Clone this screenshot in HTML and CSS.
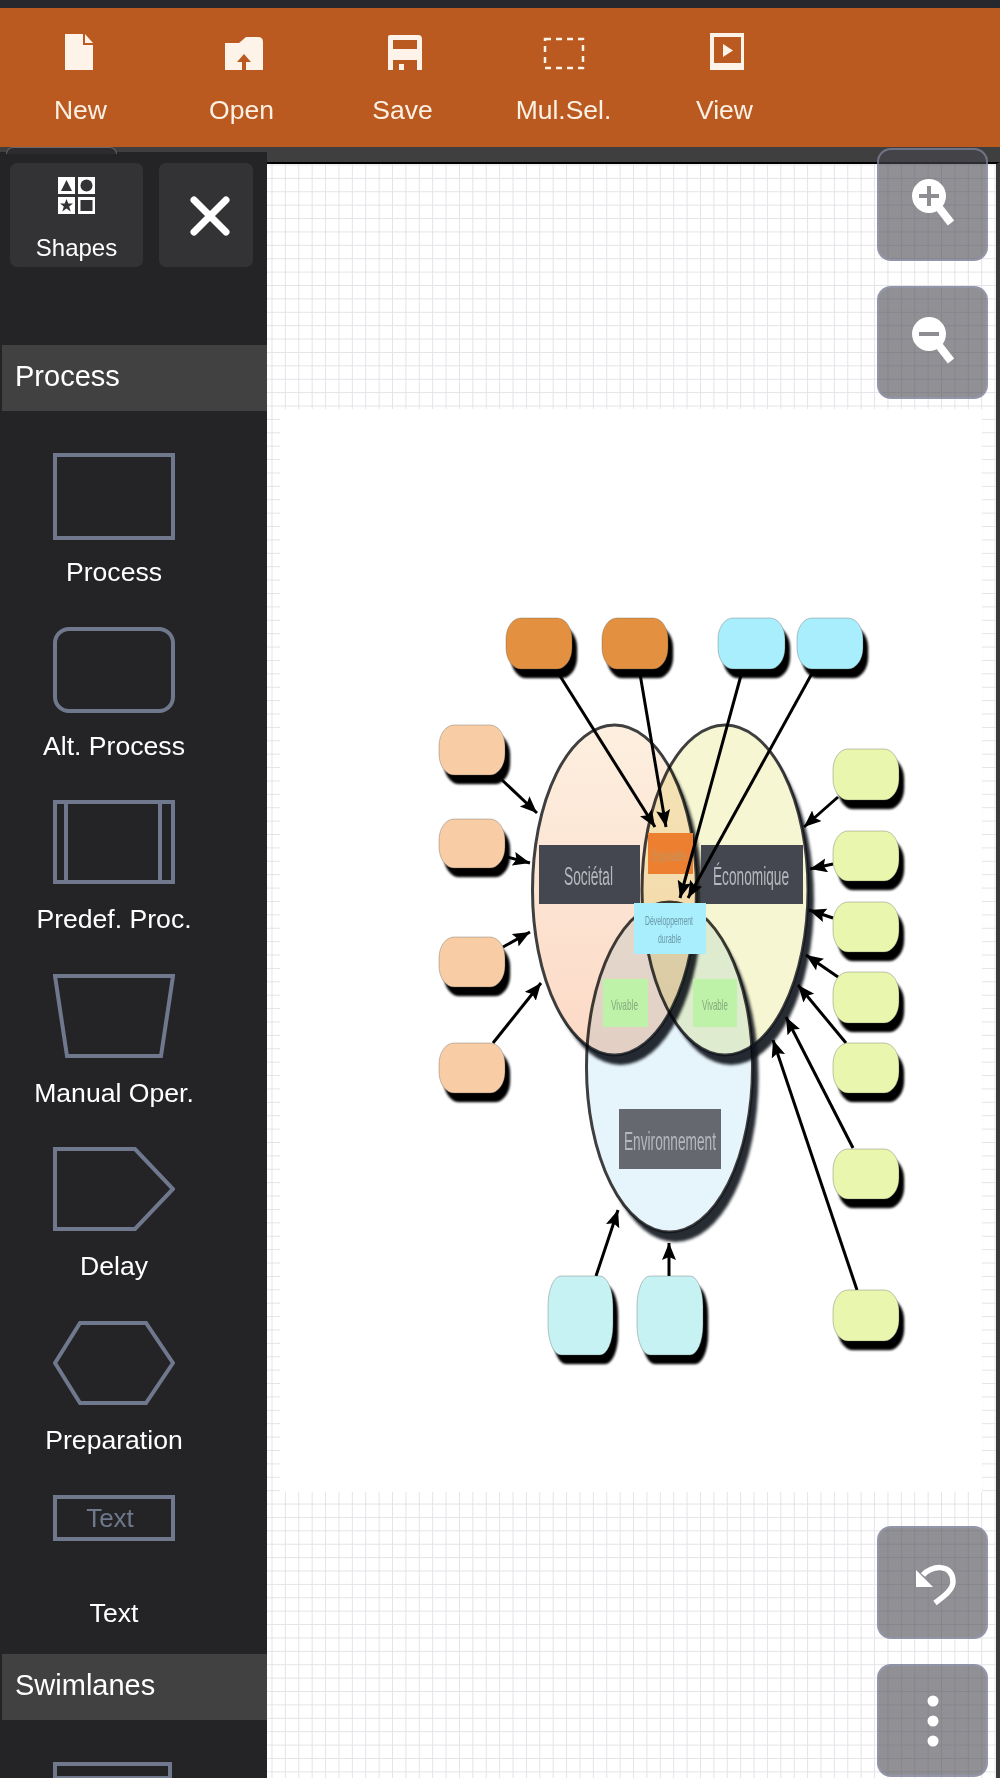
FILE: index.html
```html
<!DOCTYPE html>
<html lang="en">
<head>
  <meta charset="UTF-8" />
  <meta name="viewport" content="width=device-width, initial-scale=1.0"/>
  <title>Flowchart Editor</title>
  <link rel="stylesheet" href="styles.css">
</head>
<body>

<!-- Top toolbar -->
<div class="toolbar">
  <div class="tool">
    <svg width="40" height="38" viewBox="2 0 40 38"><path class="cream" d="M6 1H24V12H34V37H6Z"/><path class="cream" d="M26 1L34 10H26Z"/></svg>
    <span>New</span>
  </div>
  <div class="tool">
    <svg width="40" height="38" viewBox="-2 0 40 38"><path class="cream" fill-rule="evenodd" d="M1 10H15L22 4H34Q39 4 39 9V37H1ZM18 37H22V29H27L20 21L13 29H18Z"/></svg>
    <span>Open</span>
  </div>
  <div class="tool">
    <svg width="40" height="38" viewBox="-2 0 40 38"><path class="cream" fill-rule="evenodd" d="M5 2H33Q37 2 37 6V37H3V4Q3 2 5 2ZM8 7V16H32V7ZM8 27V37H14V31H19V37H32V27Z"/></svg>
    <span>Save</span>
  </div>
  <div class="tool">
    <svg width="42" height="38" viewBox="0 0 42 38"><rect class="dash" x="2" y="6" width="38" height="29"/></svg>
    <span>Mul.Sel.</span>
  </div>
  <div class="tool">
    <svg width="40" height="38" viewBox="-2 1 40 38"><path class="cream" fill-rule="evenodd" d="M3 1H37V38H3ZM7 5V31H34V5Z"/><path class="cream" d="M16 12L26 18.5L16 25Z"/></svg>
    <span>View</span>
  </div>
</div>

<div class="main">

  <!-- Shape palette -->
  <div class="sidebar">
    <div class="side-top">
      <div class="side-btn shapes-btn">
        <svg width="38" height="38" viewBox="1 0 38 38">
          <rect class="white" x="1" y="1" width="17" height="17"/>
          <rect class="white" x="21" y="1" width="17" height="17"/>
          <rect class="white" x="1" y="21" width="17" height="17"/>
          <rect class="white" x="21" y="21" width="17" height="17"/>
          <path class="ink" d="M9.5 4L15 15H4Z"/>
          <circle class="ink" cx="29.5" cy="9.5" r="6"/>
          <path class="ink" d="M9.5 23L11.3 27.6H16L12.2 30.6L13.7 35.5L9.5 32.6L5.3 35.5L6.8 30.6L3 27.6H7.7Z"/>
          <rect class="ink" x="23.500" y="24" width="12" height="11"/>
        </svg>
        <span>Shapes</span>
      </div>
      <div class="side-btn close-btn">
        <svg width="40" height="40" viewBox="0 0 40 40"><path class="x-mark" d="M4 4L36 36M36 4L4 36"/></svg>
      </div>
    </div>

    <div class="section-head first">Process</div>
    <div class="shape-list">
      <div class="shape-item">
        <svg class="shape" width="122" height="90" viewBox="0 -1 122 90"><rect x="2" y="3" width="118" height="83"/></svg>
        <span>Process</span>
      </div>
      <div class="shape-item">
        <svg class="shape" width="122" height="90" viewBox="0 -1 122 90"><rect x="2" y="3" width="118" height="82" rx="14"/></svg>
        <span>Alt. Process</span>
      </div>
      <div class="shape-item">
        <svg class="shape" width="122" height="90" viewBox="0 -1 122 90"><rect x="2" y="3" width="118" height="80"/><path d="M13 3V83M107 3V83"/></svg>
        <span>Predef. Proc.</span>
      </div>
      <div class="shape-item">
        <svg class="shape" width="122" height="90" viewBox="0 -1 122 90"><path d="M2 3H120L108 83H14Z"/></svg>
        <span>Manual Oper.</span>
      </div>
      <div class="shape-item">
        <svg class="shape" width="122" height="90" viewBox="0 -1 122 90"><path d="M2 3H82L120 43L82 83H2Z"/></svg>
        <span>Delay</span>
      </div>
      <div class="shape-item">
        <svg class="shape" width="122" height="90" viewBox="0 -1 122 90"><path d="M2 43L27 3H93L120 43L93 83H27Z"/></svg>
        <span>Preparation</span>
      </div>
      <div class="shape-item">
        <svg class="shape" width="122" height="90" viewBox="0 -1 122 90"><rect x="2" y="4" width="118" height="42"/><text class="shape-text" x="57" y="34" text-anchor="middle">Text</text></svg>
        <span>Text</span>
      </div>
    </div>

    <div class="section-head">Swimlanes</div>
    <div class="swim-list">
      <svg class="shape" width="122" height="90" viewBox="0 0 122 90"><rect x="2" y="2" width="115" height="84"/><path d="M2 16H117"/></svg>
    </div>
  </div>

  <!-- Drawing canvas -->
  <div class="canvas">
    <div class="page">
      <svg class="diagram" width="702" height="1083" viewBox="280 409 702 1083">
        <defs>
          <linearGradient id="socFill" x1="0" y1="0" x2="0" y2="1">
            <stop offset="0" stop-color="#fdefdf"/>
            <stop offset="1" stop-color="#fcd9c6"/>
          </linearGradient>
          <mask id="socMask" maskUnits="userSpaceOnUse" x="280" y="409" width="702" height="1083">
            <rect x="280" y="409" width="702" height="1083" fill="#fff"/>
            <ellipse cx="614.500" cy="890" rx="82" ry="165" fill="#000"/>
          </mask>
          <mask id="ecoMask" maskUnits="userSpaceOnUse" x="280" y="409" width="702" height="1083">
            <rect x="280" y="409" width="702" height="1083" fill="#fff"/>
            <ellipse cx="725" cy="890" rx="83" ry="165" fill="#000"/>
          </mask>
          <mask id="envMask" maskUnits="userSpaceOnUse" x="280" y="409" width="702" height="1083">
            <rect x="280" y="409" width="702" height="1083" fill="#fff"/>
            <ellipse cx="669.500" cy="1067" rx="83" ry="165" fill="#000"/>
          </mask>
          <marker id="head" markerUnits="userSpaceOnUse" markerWidth="20" markerHeight="16" refX="17" refY="7" orient="auto">
            <path d="M0 0L17 7L0 14L3 7Z" fill="#000"/>
          </marker>
        </defs>

        <ellipse class="circle" cx="614.500" cy="890" rx="82" ry="165" fill="url(#socFill)"/>
        <g mask="url(#socMask)"><ellipse class="crescent" cx="620.500" cy="900" rx="82" ry="165"/></g>

        <ellipse class="circle blend" cx="725" cy="890" rx="83" ry="165" fill="#f6f6d2"/>
        <g mask="url(#ecoMask)"><ellipse class="crescent" cx="731" cy="900" rx="83" ry="165"/></g>

        <ellipse class="circle blend" cx="669.500" cy="1067" rx="83" ry="165" fill="#e6f4fc"/>
        <g mask="url(#envMask)"><ellipse class="crescent" cx="675.500" cy="1077" rx="83" ry="165"/></g>

        <rect x="539" y="845" width="101" height="59" fill="#444750"/>
        <rect x="701" y="845" width="102" height="59" fill="#444750"/>
        <rect x="619" y="1109" width="102" height="60" fill="#65686f"/>
        <rect x="648" y="833" width="45" height="41" fill="#ed8030"/>
        <rect x="603" y="979" width="45" height="48" fill="#bdf2a8"/>
        <rect x="693" y="979" width="44" height="48" fill="#bdf2a8"/>
        <rect x="634" y="903" width="72" height="51" fill="#a8eefd"/>

        <text class="big" x="564" y="885" textLength="49" lengthAdjust="spacingAndGlyphs">Sociétal</text>
        <text class="big" x="713" y="885" textLength="76" lengthAdjust="spacingAndGlyphs">Économique</text>
        <text class="big" x="624" y="1150" textLength="92" lengthAdjust="spacingAndGlyphs">Environnement</text>
        <text class="small eq" x="652" y="861" textLength="35" lengthAdjust="spacingAndGlyphs">Équitable</text>
        <text class="tiny" x="645" y="925" textLength="48" lengthAdjust="spacingAndGlyphs">Développement</text>
        <text class="tiny" x="658" y="943" textLength="23" lengthAdjust="spacingAndGlyphs">durable</text>
        <text class="small viv" x="611" y="1010" textLength="27" lengthAdjust="spacingAndGlyphs">Vivable</text>
        <text class="small viv" x="702" y="1010" textLength="26" lengthAdjust="spacingAndGlyphs">Vivable</text>

        <g class="arrows">
          <path d="M555 668L655 827"/>
          <path d="M639 668L666 827"/>
          <path d="M743 668L680 898"/>
          <path d="M815 668L688 898"/>
          <path d="M502 780L537 813"/>
          <path d="M507 857L530 863"/>
          <path d="M503 947L530 932"/>
          <path d="M493 1043L541 983"/>
          <path d="M838 797L804 827"/>
          <path d="M833 864L810 869"/>
          <path d="M833 918L809 910"/>
          <path d="M838 977L806 955"/>
          <path d="M846 1043L798 985"/>
          <path d="M853 1148L786 1017"/>
          <path d="M857 1290L773 1040"/>
          <path d="M596 1276L618 1210"/>
          <path d="M669 1276L669 1243"/>
        </g>

        <g class="nodes">
          <rect class="orange" x="506" y="618" width="66" height="51" rx="15" ry="21"/>
          <rect class="orange" x="602" y="618" width="66" height="51" rx="15" ry="21"/>
          <rect class="sky" x="718" y="618" width="67" height="51" rx="15" ry="21"/>
          <rect class="sky" x="797" y="618" width="66" height="51" rx="15" ry="21"/>
          <rect class="peach" x="439" y="725" width="66" height="50" rx="15" ry="21"/>
          <rect class="peach" x="439" y="819" width="66" height="49" rx="15" ry="21"/>
          <rect class="peach" x="439" y="937" width="66" height="50" rx="15" ry="21"/>
          <rect class="peach" x="439" y="1043" width="66" height="50" rx="15" ry="21"/>
          <rect class="lime" x="833" y="749" width="66" height="51" rx="15" ry="21"/>
          <rect class="lime" x="833" y="831" width="66" height="50" rx="15" ry="21"/>
          <rect class="lime" x="833" y="902" width="66" height="50" rx="15" ry="21"/>
          <rect class="lime" x="833" y="972" width="66" height="51" rx="15" ry="21"/>
          <rect class="lime" x="833" y="1043" width="66" height="50" rx="15" ry="21"/>
          <rect class="lime" x="833" y="1149" width="66" height="50" rx="15" ry="21"/>
          <rect class="lime" x="833" y="1290" width="66" height="51" rx="15" ry="21"/>
          <rect class="aqua" x="548" y="1276" width="65" height="79" rx="13" ry="30"/>
          <rect class="aqua" x="637" y="1276" width="66" height="79" rx="13" ry="30"/>
        </g>
      </svg>
    </div>
  </div>

  <!-- Floating buttons -->
  <div class="float-group top">
    <div class="float-btn">
      <svg width="50" height="60" viewBox="-2 -4 50 60">
        <path class="handle" d="M27 26L41 44"/>
        <circle class="white" cx="19" cy="17" r="17"/>
        <path class="glass" d="M9 17H29M19 7V27"/>
      </svg>
    </div>
    <div class="float-btn">
      <svg width="50" height="60" viewBox="-2 -4 50 60">
        <path class="handle" d="M27 26L41 44"/>
        <circle class="white" cx="19" cy="17" r="17"/>
        <path class="glass" d="M9 17H29"/>
      </svg>
    </div>
  </div>
  <div class="float-group bottom">
    <div class="float-btn">
      <svg width="44" height="46" viewBox="-3 0 44 46">
        <path class="white" d="M2 10V27H19Z"/>
        <path class="undo" d="M9 15C16 6 39 2 39 22C39 30 29 37 21 43"/>
      </svg>
    </div>
    <div class="float-btn">
      <svg width="12" height="52" viewBox="0 0 12 52">
        <circle class="white" cx="6" cy="6" r="5.500"/>
        <circle class="white" cx="6" cy="26" r="5.500"/>
        <circle class="white" cx="6" cy="46" r="5.500"/>
      </svg>
    </div>
  </div>
</div>

</body>
</html>
```

FILE: styles.css
```css
* {
  margin: 0;
  padding: 0;
  box-sizing: border-box;
}

html, body {
  height: 100%;
  overflow: hidden;
}

body {
  font-family: "Liberation Sans", Arial, sans-serif;
  background: #3f3f3f;
  display: flex;
  flex-direction: column;
}

/* toolbar */
.toolbar {
  border-top: 8px solid #27272e;
  height: 147px;
  background: #ba5a20;
  display: flex;
  color: #fbf0e4;
  font-size: 26.5px;
}

.tool {
  width: 161px;
  display: flex;
  flex-direction: column;
  align-items: center;
  padding-top: 25px;
}

.tool svg {
  overflow: visible;
}

.tool span {
  margin-top: 24px;
  line-height: 30px;
}

.cream {
  fill: #fdf3e8;
}

.dash {
  fill: none;
  stroke: #fdf3e8;
  stroke-width: 2.5;
  stroke-dasharray: 6 5;
}

/* layout */
.main {
  position: relative;
  flex: 1;
  display: flex;
  min-height: 0;
  overflow: hidden;
}

/* sidebar */
.sidebar {
  position: relative;
  width: 267px;
  margin-top: 5px;
  flex-shrink: 0;
  background: #242427;
  color: #fff;
}

.sidebar::before {
  content: "";
  position: absolute;
  left: 6px;
  top: -5px;
  width: 109px;
  height: 6px;
  background: #2c2c30;
  border: 1px solid #66666c;
  border-bottom: none;
  border-radius: 8px 8px 0 0;
}

.side-top {
  display: flex;
  gap: 16px;
  padding: 11px 0 0 10px;
}

.side-btn {
  height: 104px;
  background: #333336;
  border-radius: 7px;
  display: flex;
  flex-direction: column;
  align-items: center;
}

.shapes-btn {
  width: 133px;
  padding-top: 13px;
  font-size: 24px;
}

.shapes-btn span {
  margin-top: 19px;
  line-height: 30px;
}

.close-btn {
  width: 94px;
  padding: 33px 0 0 8px;
}

.white {
  fill: #fff;
}

.ink {
  fill: #333336;
}

.x-mark {
  fill: none;
  stroke: #fff;
  stroke-width: 7;
  stroke-linecap: round;
}

.section-head {
  margin-left: 2px;
  height: 66px;
  line-height: 62px;
  padding-left: 13px;
  background: #414141;
  font-size: 29px;
}

.section-head.first {
  margin-top: 78px;
}

.shape-list {
  display: flex;
  flex-direction: column;
  gap: 37.5px;
  padding-top: 40px;
  margin-bottom: 26px;
}

.shape-item {
  width: 228px;
  height: 136px;
  display: flex;
  flex-direction: column;
  align-items: center;
  font-size: 26.6px;
}

.shape-item .shape {
  margin-bottom: 16px;
  flex-shrink: 0;
}

.shape-item span {
  line-height: 30px;
}

.shape {
  display: block;
}

.shape rect,
.shape path {
  fill: none;
  stroke: #6f788c;
  stroke-width: 4;
}

.shape-text {
  fill: #6f788c;
  font-size: 26px;
}

.swim-list {
  padding: 42px 0 0 53px;
}

/* canvas */
.canvas {
  flex: 1;
  margin-top: 15px;
  padding: 245px 14px 0 13px;
  border-top: 2px solid #000;
  border-right: 4px solid #3a3a3a;
  background-color: #fff;
  background-image:
    linear-gradient(#e3e3e8 1px, transparent 1px),
    linear-gradient(90deg, #e3e3e8 1px, transparent 1px);
  background-size: 13.4px 13.4px;
  background-position: 4.500px 0.500px;
}

.page {
  height: 1083px;
  background: #fff;
}

.diagram {
  display: block;
}

.circle {
  stroke: #3f3f3f;
  stroke-width: 3;
}

.blend {
  mix-blend-mode: multiply;
}

.crescent {
  fill: #10141c;
  opacity: 0.9;
  filter: blur(1.5px);
}

.big {
  fill: #b6b8bf;
  font-size: 26px;
}

.small {
  font-size: 15px;
}

.eq {
  fill: #c2925f;
}

.viv {
  fill: #86ab7d;
}

.tiny {
  fill: #6b98a8;
  font-size: 12px;
}

.arrows path {
  fill: none;
  stroke: #000;
  stroke-width: 3;
  marker-end: url(#head);
}

.nodes {
  filter: drop-shadow(5px 9px 1px #000);
}

.nodes rect {
  stroke: rgba(90, 90, 80, 0.35);
  stroke-width: 1;
}

.orange { fill: #e39140; }
.sky { fill: #a8eefd; }
.peach { fill: #f8cda6; }
.lime { fill: #e8f6ae; }
.aqua { fill: #c6f2f4; }

/* floating buttons */
.float-group {
  position: absolute;
  right: 12px;
  display: flex;
  flex-direction: column;
  gap: 25px;
}

.float-group.top {
  top: 1px;
}

.float-group.bottom {
  bottom: 1px;
}

.float-btn {
  width: 111px;
  height: 113px;
  background: rgba(70, 70, 78, 0.6);
  border: 2px solid rgba(150, 155, 185, 0.55);
  border-radius: 14px;
  display: flex;
  align-items: center;
  justify-content: center;
}

.float-btn svg {
  overflow: visible;
}

.handle {
  fill: none;
  stroke: #fff;
  stroke-width: 8;
}

.glass {
  fill: none;
  stroke: #8e8e92;
  stroke-width: 4;
}

.undo {
  fill: none;
  stroke: #fff;
  stroke-width: 5.500;
}
```
